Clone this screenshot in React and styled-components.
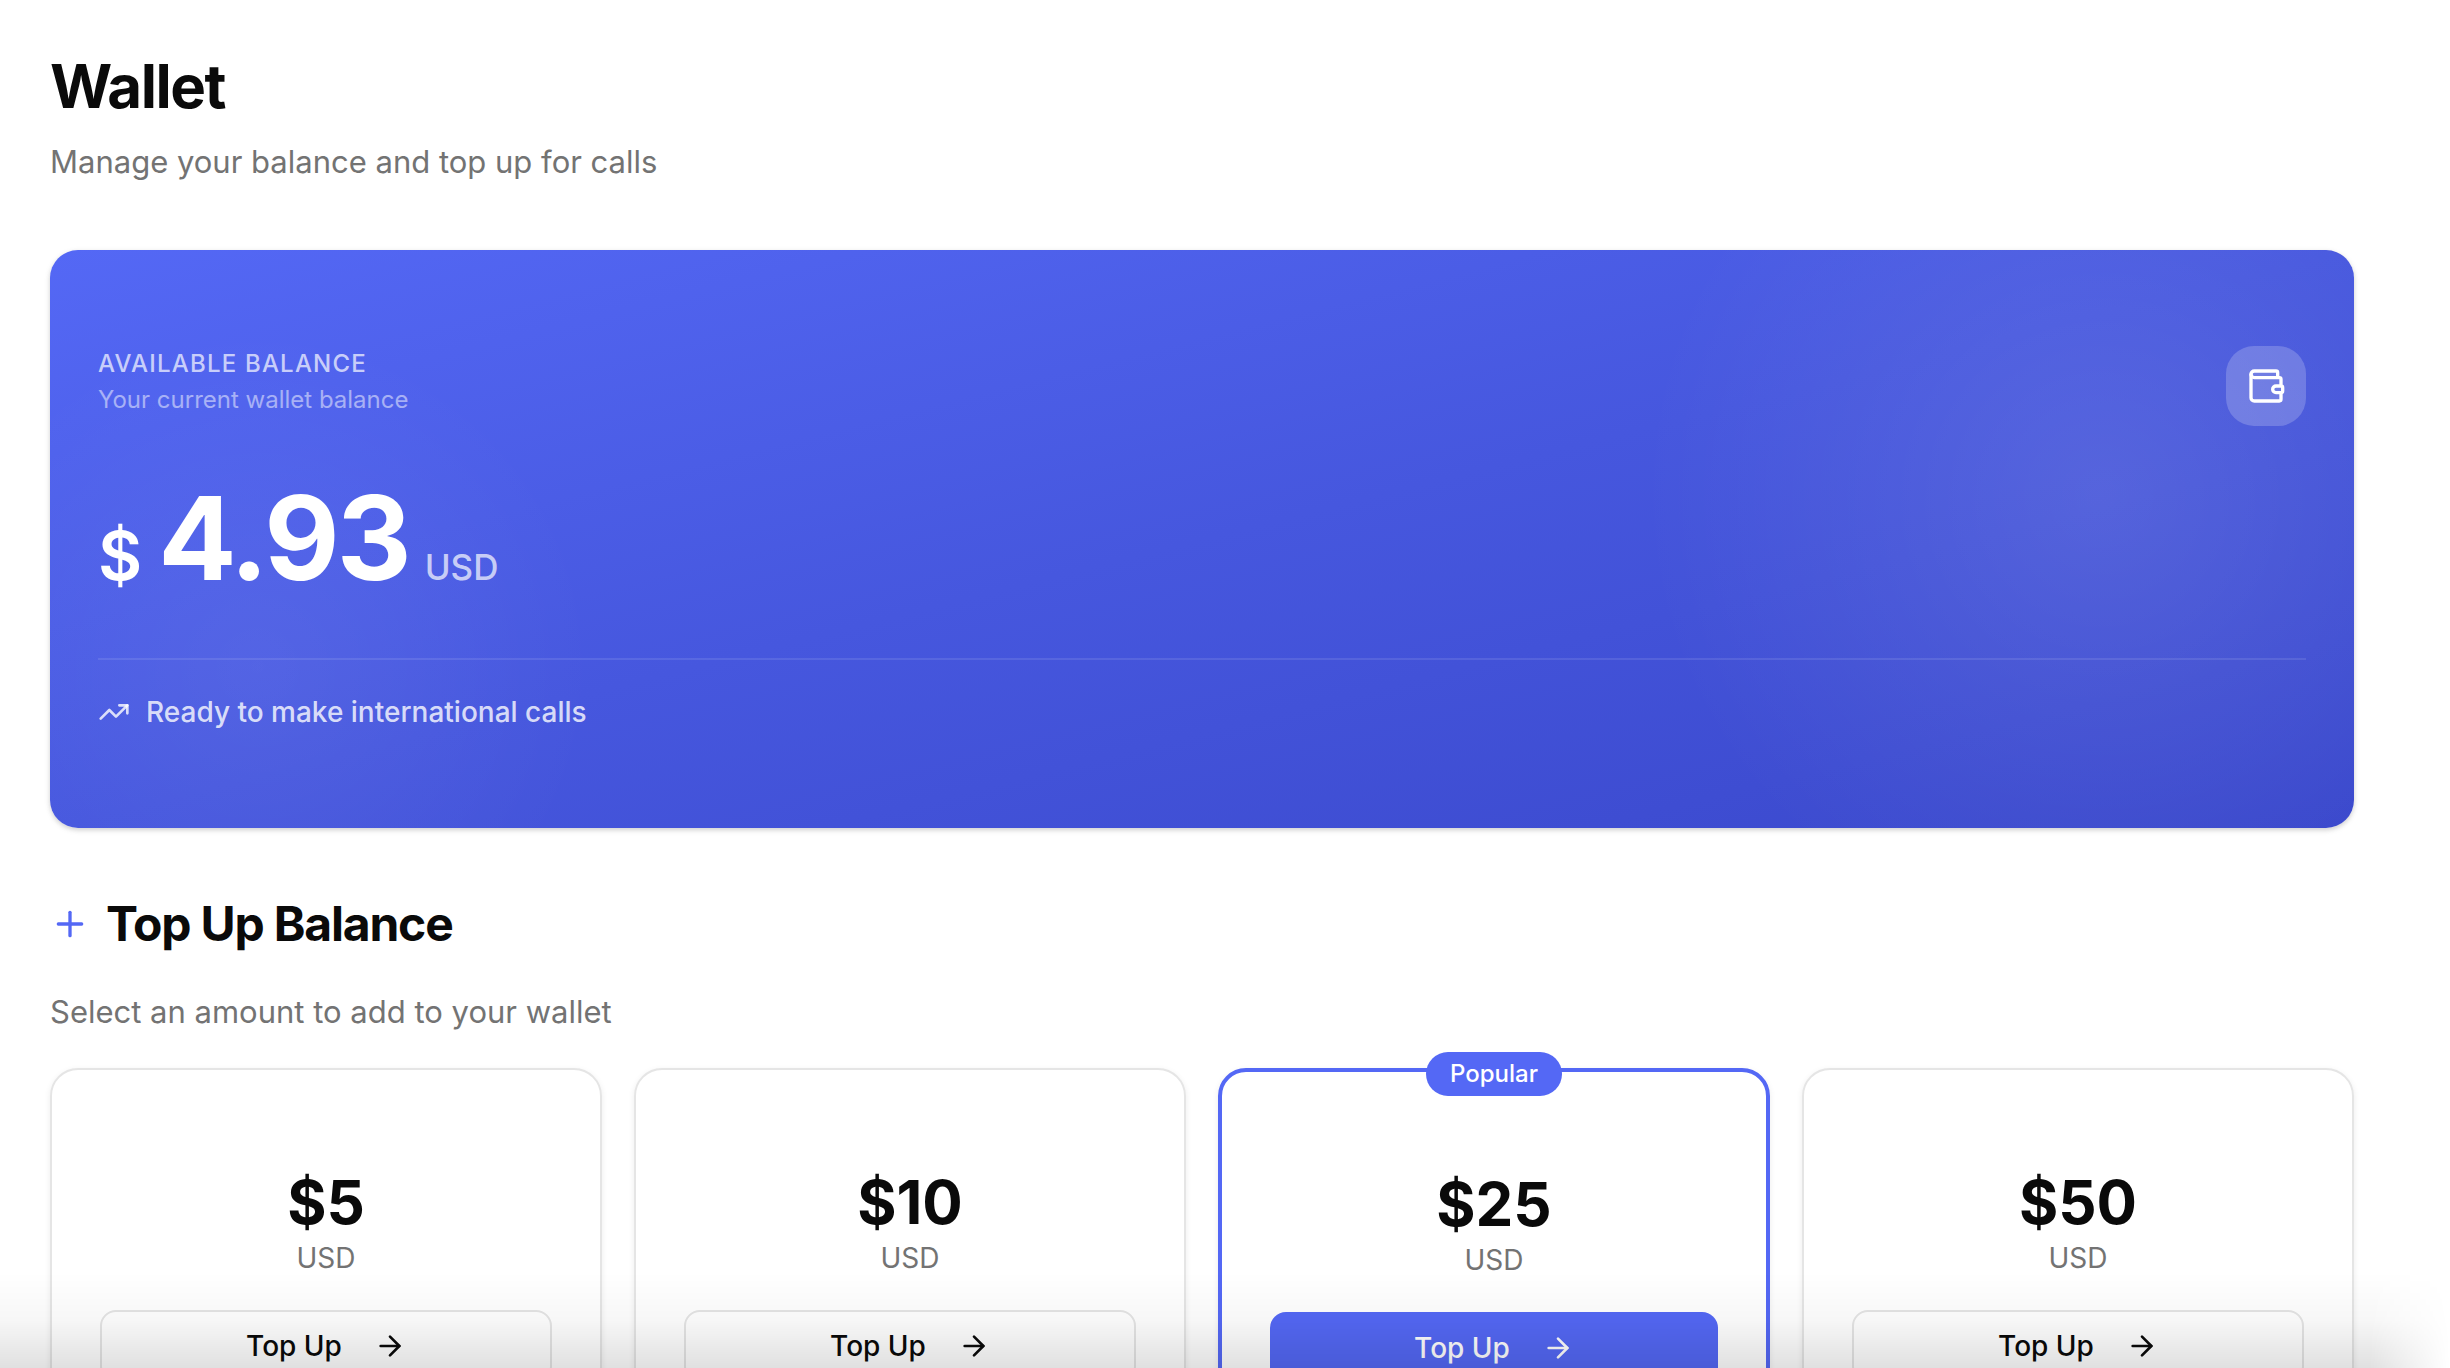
import React from 'react';
import styled, { createGlobalStyle } from 'styled-components';
import { ArrowRight, Plus, TrendingUp, Wallet } from 'lucide-react';

const GlobalStyle = createGlobalStyle`
  *, *::before, *::after { box-sizing: border-box; }
  body {
    margin: 0;
    background: #fff;
    color: #0a0a0a;
    font-family: Inter, "Liberation Sans", sans-serif;
    -webkit-font-smoothing: antialiased;
  }
  h1, h2, p { margin: 0; }
`;

const Viewport = styled.div`
  height: 100vh;
  overflow: hidden;
`;

const Page = styled.main`
  display: flex;
  flex-direction: column;
  gap: 64px;
  padding: 50px 96px 64px 50px;
`;

const PageHeader = styled.header`
  display: flex;
  flex-direction: column;
  gap: 16px;
`;

const Title = styled.h1`
  font-size: 60px;
  line-height: 72px;
  font-weight: 700;
  letter-spacing: -0.025em;
`;

const Lead = styled.p`
  font-size: 31px;
  line-height: 48px;
  color: #737373;
`;

const BalanceCard = styled.section`
  display: flex;
  flex-direction: column;
  padding: 96px 48px;
  border-radius: 28px;
  color: #fff;
  background:
    radial-gradient(circle at 89% 42%, rgba(255, 255, 255, 0.1), rgba(255, 255, 255, 0.05) 220px, rgba(255, 255, 255, 0) 460px),
    radial-gradient(circle at 9% 72%, rgba(255, 255, 255, 0.06), rgba(255, 255, 255, 0.03) 160px, rgba(255, 255, 255, 0) 340px),
    linear-gradient(to bottom right, #5468f5, #4657de 50%, #3a48cc);
  box-shadow: 0 2px 6px rgba(0, 0, 0, 0.1), 0 2px 4px rgba(0, 0, 0, 0.1);
`;

const BalanceTop = styled.div`
  display: flex;
  justify-content: space-between;
  align-items: flex-start;
`;

const Overline = styled.p`
  font-size: 24px;
  line-height: 36px;
  font-weight: 500;
  letter-spacing: 0.05em;
  text-transform: uppercase;
  color: rgba(255, 255, 255, 0.7);
`;

const Hint = styled.p`
  font-size: 24px;
  line-height: 36px;
  color: rgba(255, 255, 255, 0.5);
`;

const IconTile = styled.div`
  display: grid;
  place-items: center;
  width: 80px;
  height: 80px;
  border-radius: 28px;
  background: rgba(255, 255, 255, 0.2);
`;

const Amount = styled.p`
  display: flex;
  align-items: baseline;
  gap: 16px;
  margin-top: 48px;
  line-height: 1;
`;

const Currency = styled.span`
  font-size: 68px;
  font-weight: 600;
`;

const Figure = styled.span`
  font-size: 116px;
  line-height: 128px;
  font-weight: 700;
  letter-spacing: -0.025em;
`;

const Unit = styled.span`
  font-size: 35px;
  font-weight: 500;
  color: rgba(255, 255, 255, 0.7);
`;

const Status = styled.p`
  display: flex;
  align-items: center;
  gap: 16px;
  margin-top: 56px;
  padding-top: 32px;
  border-top: 2px solid rgba(255, 255, 255, 0.1);
  font-size: 28px;
  line-height: 40px;
  font-weight: 500;
  color: rgba(255, 255, 255, 0.8);
`;

const TopUpSection = styled.section`
  display: flex;
  flex-direction: column;
`;

const SectionTitle = styled.h2`
  display: flex;
  align-items: center;
  gap: 16px;
  font-size: 48px;
  line-height: 64px;
  font-weight: 700;
  letter-spacing: -0.025em;

  svg { color: #5468f5; }
`;

const SectionLead = styled(Lead)`
  margin-top: 32px;
`;

const Options = styled.div`
  display: grid;
  grid-template-columns: repeat(4, minmax(0, 1fr));
  align-items: start;
  gap: 32px;
  margin-top: 32px;
`;

const Option = styled.article`
  position: relative;
  display: flex;
  flex-direction: column;
  align-items: center;
  padding: 96px 48px;
  border: ${(p) => (p.$popular ? '4px solid #5468f5' : '2px solid #e5e5e5')};
  border-radius: 28px;
  background: #fff;
  box-shadow: 0 2px 6px rgba(0, 0, 0, 0.08);
`;

const Badge = styled.span`
  position: absolute;
  top: -20px;
  left: 50%;
  transform: translateX(-50%);
  padding: 6px 24px;
  border-radius: 22px;
  background: #5468f5;
  color: #fff;
  font-size: 24px;
  line-height: 32px;
  font-weight: 500;
`;

const Price = styled.p`
  font-size: 60px;
  line-height: 72px;
  font-weight: 700;
`;

const PriceUnit = styled.p`
  font-size: 28px;
  line-height: 40px;
  color: #737373;
`;

const TopUpButton = styled.button`
  display: flex;
  align-items: center;
  justify-content: center;
  gap: 32px;
  width: 100%;
  height: 72px;
  margin-top: 32px;
  border: ${(p) => (p.$popular ? '0' : '2px solid #e5e5e5')};
  border-radius: 16px;
  background: ${(p) => (p.$popular ? '#5468f5' : '#fff')};
  color: ${(p) => (p.$popular ? '#fff' : '#0a0a0a')};
  font: 500 28px/40px Inter, "Liberation Sans", sans-serif;
  cursor: pointer;
`;

const BottomShade = styled.div`
  position: fixed;
  inset: auto 0 0;
  height: 96px;
  pointer-events: none;
  background: linear-gradient(to bottom, rgba(0, 0, 0, 0), rgba(0, 0, 0, 0.03) 50%, rgba(0, 0, 0, 0.12));
  mask-image: linear-gradient(to left, transparent, #000 80px);
`;

const options = [
  { amount: 5 },
  { amount: 10 },
  { amount: 25, popular: true },
  { amount: 50 },
];

export default function App() {
  return (
    <Viewport>
      <GlobalStyle />
      <Page>
        <PageHeader>
          <Title>Wallet</Title>
          <Lead>Manage your balance and top up for calls</Lead>
        </PageHeader>

        <BalanceCard>
          <BalanceTop>
            <div>
              <Overline>Available Balance</Overline>
              <Hint>Your current wallet balance</Hint>
            </div>
            <IconTile>
              <Wallet size={40} />
            </IconTile>
          </BalanceTop>
          <Amount>
            <Currency>$</Currency>
            <Figure>4.93</Figure>
            <Unit>USD</Unit>
          </Amount>
          <Status>
            <TrendingUp size={32} />
            Ready to make international calls
          </Status>
        </BalanceCard>

        <TopUpSection>
          <SectionTitle>
            <Plus size={40} />
            Top Up Balance
          </SectionTitle>
          <SectionLead>Select an amount to add to your wallet</SectionLead>
          <Options>
            {options.map(({ amount, popular }) => (
              <Option key={amount} $popular={popular}>
                {popular && <Badge>Popular</Badge>}
                <Price>${amount}</Price>
                <PriceUnit>USD</PriceUnit>
                <TopUpButton type="button" $popular={popular}>
                  Top Up
                  <ArrowRight size={32} />
                </TopUpButton>
              </Option>
            ))}
          </Options>
        </TopUpSection>
      </Page>
      <BottomShade />
    </Viewport>
  );
}
